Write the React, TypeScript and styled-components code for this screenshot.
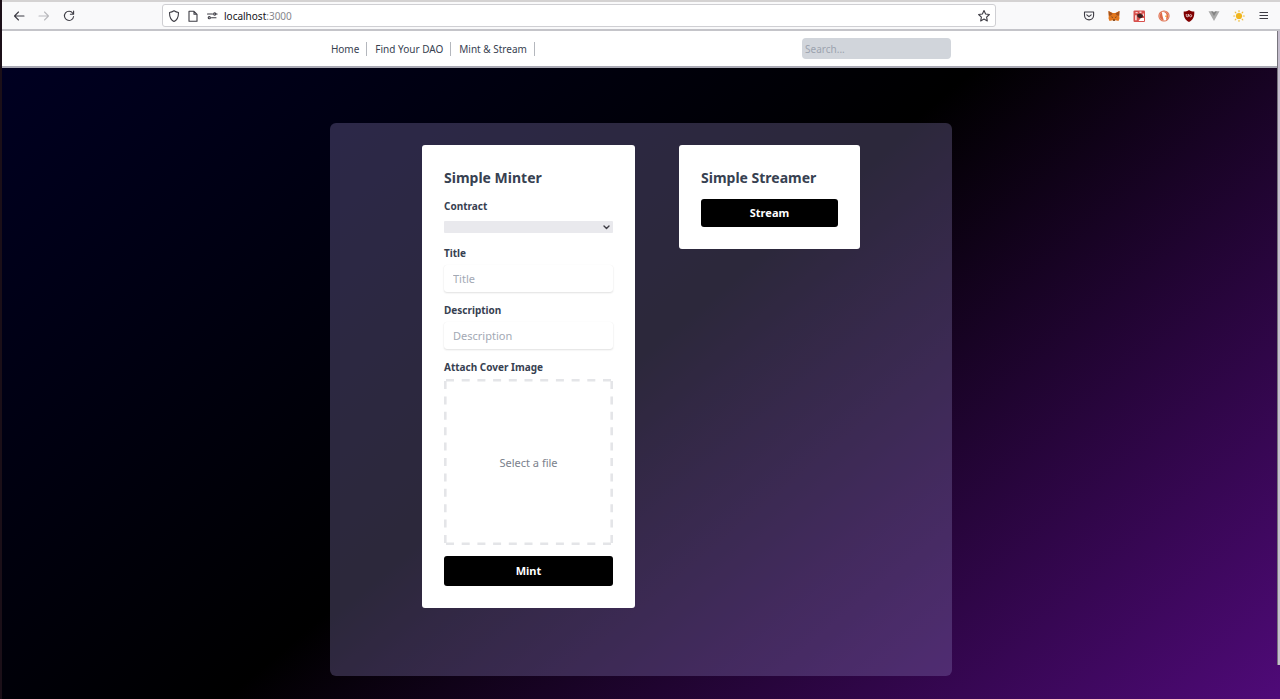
import React from 'react';
import styled, { createGlobalStyle } from 'styled-components';

const Global = createGlobalStyle`
  *, *::before, *::after { box-sizing: border-box; }
  body {
    margin: 0;
    font-family: "Noto Sans", "Open Sans", sans-serif;
    color: #374151;
    background: #000;
  }
  button, input, select { font: inherit; color: inherit; border: 0; margin: 0; padding: 0; }
  h2 { margin: 0; }
`;

const Window = styled.div`
  position: relative;
  display: flex;
  flex-direction: column;
  min-height: 100vh;
  border-left: 2px solid #1b0f18;
  background: linear-gradient(140deg, #000024 0%, #000 50%, #4f0a78 100%);
`;

const Toolbar = styled.div`
  display: grid;
  grid-template-columns: 160px minmax(0, 834px) 1fr;
  align-items: center;
  height: 31px;
  border-top: 2px solid #d4d2d2;
  border-bottom: 2px solid #c4c4c9;
  background: #f9f9fa;
`;

const ToolGroup = styled.div<{ $end?: boolean }>`
  display: flex;
  align-items: center;
  justify-content: ${p => (p.$end ? 'flex-end' : 'flex-start')};
  gap: 11px;
  padding: ${p => (p.$end ? '0 9px 0 0' : '0 0 0 10px')};
`;

const IconButton = styled.button`
  display: flex;
  flex: none;
  width: 14px;
  height: 14px;
  background: none;
  cursor: pointer;
  svg { width: 14px; height: 14px; display: block; }
`;

const AddressBar = styled.div`
  display: flex;
  align-items: center;
  gap: 5px;
  height: 23px;
  padding: 0 4px;
  border: 1px solid #cfcfd3;
  border-radius: 3px;
  background: #fff;
`;

const Address = styled.div`
  flex: 1;
  font-size: 10px;
  line-height: 14px;
  color: #15141a;
  span { color: #87878c; }
`;

const Nav = styled.nav`
  height: 37px;
  background: #fff;
  border-bottom: 2px solid #a9a9b4;
`;

const NavInner = styled.div`
  display: flex;
  align-items: center;
  justify-content: space-between;
  width: calc(49% - 4px);
  height: 100%;
  margin: 0 auto;
  padding: 0 1px;
`;

const Links = styled.div`
  display: flex;
`;

const NavLink = styled.a`
  margin-right: 8px;
  padding-right: 7px;
  border-right: 1px solid #b4b7bd;
  font-size: 10px;
  line-height: 14px;
  color: #374151;
  text-decoration: none;
`;

const Search = styled.input`
  width: 149px;
  height: 21px;
  padding: 0 3px;
  border-radius: 4px;
  background: #d1d5db;
  font-size: 10px;
  &::placeholder { color: #9ca3af; opacity: 1; }
`;

const Main = styled.main`
  display: flex;
  flex: 1;
  align-items: flex-start;
  justify-content: center;
  padding: 55px 0 23px;
`;

const Panel = styled.section`
  display: flex;
  align-items: flex-start;
  justify-content: center;
  gap: 44px;
  width: calc(49% - 4px);
  min-height: 553px;
  padding: 22px;
  border-radius: 6px;
  background: rgba(147, 133, 196, 0.3);
`;

const Card = styled.form<{ $width: number }>`
  display: flex;
  flex-direction: column;
  width: ${p => p.$width}px;
  padding: 22px;
  border-radius: 3px;
  background: #fff;
`;

const CardTitle = styled.h2`
  margin-bottom: 10px;
  font-size: 14px;
  line-height: 22px;
  font-weight: 700;
`;

const Label = styled.label`
  margin-bottom: 5px;
  font-size: 10px;
  line-height: 14px;
  font-weight: 700;
`;

const SelectWrap = styled.div`
  position: relative;
  display: flex;
  margin: 3px 0 13px;
  svg { position: absolute; right: 3px; top: 3px; width: 7px; height: 7px; pointer-events: none; }
`;

const Select = styled.select`
  appearance: none;
  width: 100%;
  height: 12px;
  border-radius: 1px;
  background: #e9e9ed;
`;

const TextInput = styled.input`
  height: 27px;
  margin-bottom: 11px;
  padding: 0 9px;
  border-radius: 3px;
  background: #fff;
  box-shadow: 0 1px 2px rgba(0, 0, 0, 0.12), 0 0 1px rgba(0, 0, 0, 0.06);
  font-size: 11px;
  &::placeholder { color: #a3a9b4; opacity: 1; }
`;

const DropZone = styled.label`
  position: relative;
  display: flex;
  align-items: center;
  justify-content: center;
  height: 166px;
  margin-bottom: 11px;
  font-size: 11px;
  color: #7b818c;
  cursor: pointer;
  svg { position: absolute; inset: 0; width: 100%; height: 100%; }
  input { position: absolute; inset: 0; width: 100%; height: 100%; opacity: 0; }
`;

const Action = styled.button<{ $tall?: boolean }>`
  height: ${p => (p.$tall ? 30 : 28)}px;
  padding-bottom: 2px;
  border-radius: 3px;
  background: #000;
  color: #fff;
  font-size: 11px;
  font-weight: 700;
  cursor: pointer;
`;

const ScrollThumb = styled.div`
  position: absolute;
  top: 31px;
  right: 0;
  bottom: 34px;
  width: 3px;
  border-left: 1px solid #77757d;
  background: #c5bdcd;
`;

const line = { fill: 'none', stroke: '#3d3c44', strokeWidth: 1.1, strokeLinecap: 'round', strokeLinejoin: 'round' } as const;

const icons = {
  Back: <path {...line} d="M12 7H2.500M6.500 3 2.500 7l4 4" />,
  Forward: <path {...line} stroke="#b9b9bd" d="M2 7h9.500M7.500 3l4 4-4 4" />,
  Reload: <path {...line} d="M10.800 4.200A4.600 4.600 0 1 0 11.600 7.500M11.600 2v3.200H8.400" />,
  Shield: <path {...line} d="M7 1.800c1.500 1 3 1.500 4.500 1.700C11.500 8 10.500 11 7 12.500 3.500 11 2.500 8 2.500 3.500 4 3.300 5.500 2.800 7 1.800Z" />,
  Page: <path {...line} d="M3 2.300h5l3 3v6.900H3ZM8 2.300v3h3" />,
  Permissions: (
    <g {...line}>
      <path d="M2.500 5h5M6.500 8.700H11" />
      <circle cx="9.700" cy="5" r="1.100" />
      <path d="M10.900 5h1.200" />
      <circle cx="4.300" cy="8.700" r="1.100" />
    </g>
  ),
  Bookmark: <path {...line} d="m7 1.600 1.600 3.400 3.800.5-2.800 2.600.7 3.800L7 10.100l-3.300 1.800.7-3.800-2.800-2.600 3.800-.5Z" />,
  Pocket: (
    <g {...line}>
      <path d="M2.500 3h9.100v3.300a4.550 4.550 0 0 1-9.100 0Z" />
      <path d="m4.800 5.800 2.200 1.900 2.200-1.900" />
    </g>
  ),
  MetaMask: (
    <g>
      <path fill="#e2761b" d="m1.500 2 4.200 2h2.600l4.200-2-.3 4.500.3 3-1 2.500-3-.8-1 .8h-1l-1-.8-3 .8-1-2.500.3-3Z" />
      <path fill="#a5511a" d="m1.500 2 4.200 2.500L4 6.500l-2.200.2ZM12.500 2 8.300 4.500 10 6.500l2.200.2Z" />
      <path fill="#4a3328" d="M4 7.500 5.800 8 5.500 9ZM10 7.500 8.200 8l.3 1ZM6 10.500h2l-.3 1.300H6.300Z" />
    </g>
  ),
  RedBlock: (
    <g>
      <rect x="1.500" y="1.500" width="11.500" height="11.500" rx="1" fill="#d8504d" />
      <path fill="#f6d3d1" d="M3.500 3h2.200v1.200H3.500ZM7.500 2.600h2v1.400h-2ZM3 6.200h1.800v5H3ZM10.500 4.500h1.500V7h-1.500Z" />
      <path fill="#3b2222" d="m5 5.600 3-1 2.800 1.400v2L8.500 9.500 5.600 8Z" />
      <path fill="#fff" d="M8.800 9h3.200v3H6.500Z" />
    </g>
  ),
  Duck: (
    <g>
      <circle cx="7" cy="7" r="5.600" fill="#de6a48" />
      <circle cx="7" cy="7" r="4.600" fill="none" stroke="#f0b7a4" strokeWidth=".6" />
      <path fill="#fff" d="M5 3c2.400-.5 4.600.8 4.600 3.500L9 11.200H6.800C6 8.500 5 6 5 3Z" />
      <path fill="#f4a53b" d="M8.300 6.400h2.400L9.700 7.900H8.200Z" />
    </g>
  ),
  Ublock: (
    <g>
      <path fill="#800000" d="M7 1c1.500 1 3.500 1.500 5.300 1.500C12.500 8 11 11 7 13 3 11 1.500 8 1.700 2.500 3.500 2.500 5.500 2 7 1Z" />
      <path fill="none" stroke="#e8cfcf" strokeWidth=".9" d="M4.300 5v1.800a1 1 0 0 0 2 0V5v2.700" />
      <circle cx="8.600" cy="6.700" r="1.100" fill="none" stroke="#e8cfcf" strokeWidth=".9" />
    </g>
  ),
  Vue: (
    <g>
      <path fill="#aaa" d="M1.500 2.200h3L7 6.600l2.500-4.400h3L7 12Z" />
      <path fill="#828282" d="M4.100 2.200h2L7 3.600l.9-1.400h2L7 7.300Z" />
    </g>
  ),
  Sun: (
    <g>
      <circle cx="7" cy="7" r="3.100" fill="#f0b51c" />
      <path stroke="#f0bd37" strokeWidth="1.200" strokeLinecap="round" d="M7 1.700v1M7 11.300v1M1.700 7h1M11.300 7h1M3.200 3.200l.7.7M10.100 10.100l.7.7M3.200 10.800l.7-.7M10.100 3.900l.7-.7" />
    </g>
  ),
  Menu: <path {...line} strokeLinecap="butt" d="M2.500 3.500h8.500M2.500 6.500h8.500M2.500 9.500h8.500" />,
};

const Tool = ({ name }: { name: keyof typeof icons }) => (
  <IconButton type="button" aria-label={name}>
    <svg viewBox="0 0 14 14">{icons[name]}</svg>
  </IconButton>
);

const DashedFrame = () => (
  <svg viewBox="0 0 169 166" fill="none" stroke="#e4e5e8" strokeWidth="2.600">
    <path strokeDasharray="8 7.700" d="M2 1.300h165M2 164.700h165" />
    <path strokeDasharray="8 7.400" d="M1.300 2v162M167.700 2v162" />
  </svg>
);

export default function App() {
  return (
    <>
      <Global />
      <Window>
        <Toolbar>
          <ToolGroup>
            <Tool name="Back" />
            <Tool name="Forward" />
            <Tool name="Reload" />
          </ToolGroup>
          <AddressBar>
            <Tool name="Shield" />
            <Tool name="Page" />
            <Tool name="Permissions" />
            <Address>localhost<span>:3000</span></Address>
            <Tool name="Bookmark" />
          </AddressBar>
          <ToolGroup $end>
            <Tool name="Pocket" />
            <Tool name="MetaMask" />
            <Tool name="RedBlock" />
            <Tool name="Duck" />
            <Tool name="Ublock" />
            <Tool name="Vue" />
            <Tool name="Sun" />
            <Tool name="Menu" />
          </ToolGroup>
        </Toolbar>
        <Nav>
          <NavInner>
            <Links>
              <NavLink href="#home">Home</NavLink>
              <NavLink href="#find">Find Your DAO</NavLink>
              <NavLink href="#mint">Mint &amp; Stream</NavLink>
            </Links>
            <Search type="search" placeholder="Search..." aria-label="Search" />
          </NavInner>
        </Nav>
        <Main>
          <Panel>
            <Card $width={213}>
              <CardTitle>Simple Minter</CardTitle>
              <Label htmlFor="contract">Contract</Label>
              <SelectWrap>
                <Select id="contract" />
                <svg viewBox="0 0 7 7"><path {...line} strokeWidth={1.4} d="m1 2 2.500 2.500L6 2" /></svg>
              </SelectWrap>
              <Label htmlFor="title">Title</Label>
              <TextInput id="title" placeholder="Title" />
              <Label htmlFor="description">Description</Label>
              <TextInput id="description" placeholder="Description" />
              <Label htmlFor="cover">Attach Cover Image</Label>
              <DropZone>
                <DashedFrame />
                Select a file
                <input id="cover" type="file" />
              </DropZone>
              <Action type="button" $tall>Mint</Action>
            </Card>
            <Card $width={181}>
              <CardTitle>Simple Streamer</CardTitle>
              <Action type="button">Stream</Action>
            </Card>
          </Panel>
        </Main>
        <ScrollThumb />
      </Window>
    </>
  );
}
